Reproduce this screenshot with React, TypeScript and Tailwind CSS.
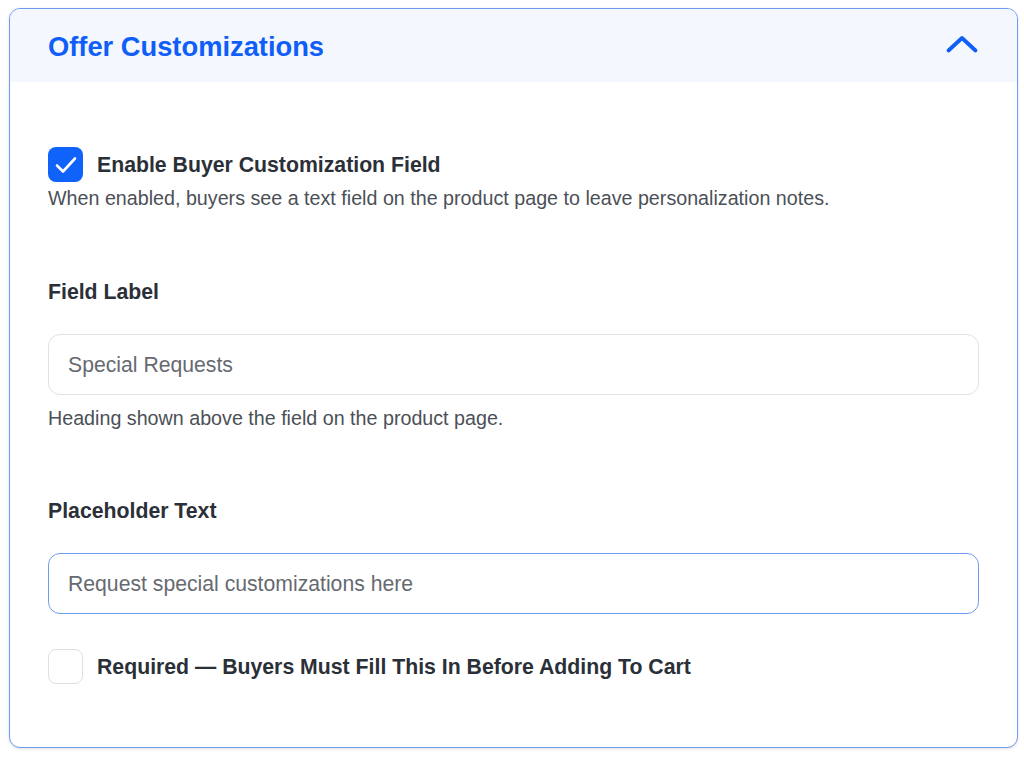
import { useState } from "react";

function CheckBox({ checked, onChange }: { checked: boolean; onChange: () => void }) {
    return (
        <button
            type="button"
            onClick={onChange}
            className={
                checked
                    ? "w-[35px] h-[35px] rounded-[8px] bg-[#0f62fa] flex items-center justify-center shrink-0"
                    : "w-[35px] h-[35px] rounded-[8px] bg-white border border-[#dcdfe4] shrink-0"
            }
        >
            {checked && (
                <svg width="26" height="26" viewBox="0 0 26 26" fill="none">
                    <path d="M4 13.5 L10 19.5 L22 6.5" stroke="white" strokeWidth="2.6" strokeLinecap="round" strokeLinejoin="round" />
                </svg>
            )}
        </button>
    );
}

export default function App() {
    const [open, setOpen] = useState(true);
    const [enabled, setEnabled] = useState(true);
    const [required, setRequired] = useState(false);

    return (
        <div className="bg-white min-h-[757px] pt-[8px] pl-[9px] font-['Liberation_Sans',Arial,sans-serif]">
            <div className="w-[1009px] rounded-[11px] border-[1.5px] border-[#6f9cf1] overflow-hidden shadow-[0_1px_3px_rgba(0,0,0,0.12)] bg-white">
                {/* Header */}
                <div
                    className="h-[73px] bg-[#f4f7fd] flex items-center justify-between pl-[38px] pr-[39px] cursor-pointer"
                    onClick={() => setOpen(!open)}
                >
                    <h2 className="text-[27.3px] leading-[32px] font-bold text-[#0f5ef7] mt-[3px]">Offer Customizations</h2>
                    <svg width="34" height="20" viewBox="0 0 34 20" fill="none" className="mr-[-1px] mt-[-2px]">
                        <path d="M3.5 15.5 L17 3 L30.5 15.5" stroke="#0f5ef7" strokeWidth="3.8" strokeLinecap="round" strokeLinejoin="round" />
                    </svg>
                </div>

                {open && (
                    <div className="pl-[38px] pr-[38px] pt-[65px] pb-[63px]">
                        <div className="flex items-center gap-[14px]">
                            <CheckBox checked={enabled} onChange={() => setEnabled(!enabled)} />
                            <span className="text-[21.25px] leading-[28px] font-bold text-[#2b3038]">Enable Buyer Customization Field</span>
                        </div>
                        <p className="mt-[4px] text-[19.7px] leading-[24px] text-[#4b5057]">
                            When enabled, buyers see a text field on the product page to leave personalization notes.
                        </p>

                        <label htmlFor="label" className="block mt-[68px] text-[21.25px] leading-[28px] font-bold text-[#2b3038]">
                            Field Label
                        </label>
                        <input
                            id="label"
                            type="text"
                            placeholder="Special Requests"
                            className="mt-[28px] w-[931px] h-[61px] rounded-[12px] border border-[#dfe1e5] px-[19px] text-[21.2px] text-[#2b3038] placeholder:text-[#666a70] outline-none"
                        />
                        <p className="mt-[11px] text-[19.7px] leading-[24px] text-[#4b5057]">
                            Heading shown above the field on the product page.
                        </p>

                        <label htmlFor="placeholder" className="block mt-[67px] text-[21.25px] leading-[28px] font-bold text-[#2b3038]">
                            Placeholder Text
                        </label>
                        <input
                            id="placeholder"
                            type="text"
                            placeholder="Request special customizations here"
                            className="mt-[28px] w-[931px] h-[61px] rounded-[12px] border-[1.5px] border-[#6f9cf1] px-[19px] text-[21.2px] text-[#2b3038] placeholder:text-[#666a70] outline-none"
                        />

                        <div className="flex items-center gap-[14px] mt-[35px]">
                            <CheckBox checked={required} onChange={() => setRequired(!required)} />
                            <span className="text-[21.25px] leading-[28px] font-bold text-[#2b3038]">
                                Required — Buyers Must Fill This In Before Adding To Cart
                            </span>
                        </div>
                    </div>
                )}
            </div>
        </div>
    );
}
